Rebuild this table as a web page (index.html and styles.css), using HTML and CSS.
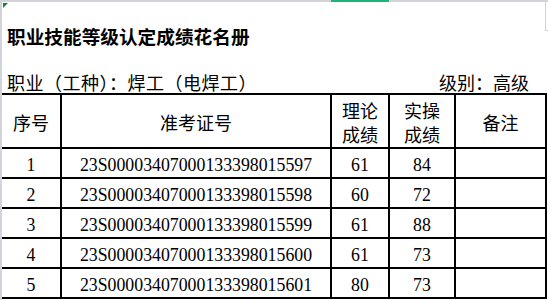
FILE: index.html
```html
<!DOCTYPE html>
<html lang="zh-CN">
<head>
<meta charset="utf-8">
<title>职业技能等级认定成绩花名册</title>
<link rel="stylesheet" href="styles.css">
</head>
<body>
<div class="sheet">
  <div class="marker"></div>
  <div class="colsel"></div>
  <div class="gridtick"></div>
  <h1 class="title">职业技能等级认定成绩花名册</h1>
  <div class="sub"><span>职业（工种）：焊工（电焊工）</span><span>级别：高级</span></div>
  <table class="roster">
    <colgroup>
      <col class="c-no"><col class="c-id"><col class="c-th"><col class="c-pr"><col class="c-note">
    </colgroup>
    <thead>
      <tr><th>序号</th><th>准考证号</th><th>理论<br>成绩</th><th>实操<br>成绩</th><th>备注</th></tr>
    </thead>
    <tbody>
      <tr><td>1</td><td>23S00003407000133398015597</td><td>61</td><td>84</td><td></td></tr>
      <tr><td>2</td><td>23S00003407000133398015598</td><td>60</td><td>72</td><td></td></tr>
      <tr><td>3</td><td>23S00003407000133398015599</td><td>61</td><td>88</td><td></td></tr>
      <tr><td>4</td><td>23S00003407000133398015600</td><td>61</td><td>73</td><td></td></tr>
      <tr><td>5</td><td>23S00003407000133398015601</td><td>80</td><td>73</td><td></td></tr>
    </tbody>
  </table>
</div>
</body>
</html>
```

FILE: styles.css
```css
html, body {
  margin: 0;
  background: #fff;
}
body {
  width: 548px;
  height: 300px;
  overflow: hidden;
  font-family: "Liberation Serif", "Noto Sans CJK SC", serif;
  color: #000;
}
.sheet {
  position: relative;
  height: 300px;
  box-sizing: border-box;
  border-top: 2px solid #d2d4da;
  border-left: 2px solid #d2d4da;
}
.marker {
  position: absolute;
  left: 1px;
  top: 1px;
  width: 0;
  height: 0;
  border-top: 5px solid #1e7e3e;
  border-right: 5px solid transparent;
}
.colsel {
  position: absolute;
  left: 329px;
  top: -2px;
  width: 58px;
  height: 2px;
  background: #21b27a;
}
.gridtick {
  position: absolute;
  left: 543px;
  top: 0;
  width: 3px;
  height: 28px;
  border-left: 1px solid #d2d4da;
  border-bottom: 1px solid #d2d4da;
}
.title {
  margin: 0;
  height: 67px;
  line-height: 67px;
  padding-left: 5px;
  font-family: "Noto Sans CJK SC", sans-serif;
  font-size: 18.67px;
  font-weight: 700;
}
.sub {
  height: 24px;
  line-height: 26px;
  display: flex;
  justify-content: space-between;
  padding: 0 19px 0 5px;
  font-family: "Noto Sans CJK SC", sans-serif;
  font-size: 18px;
}
.sub span:first-child {
  letter-spacing: 0.5px;
}
.roster {
  border-collapse: collapse;
  table-layout: fixed;
  width: 544px;
  font-size: 18px;
}
.c-no { width: 59px; }
.c-id { width: 270px; }
.c-th { width: 58px; }
.c-pr { width: 66px; }
.c-note { width: 91px; }
.roster th, .roster td {
  border: 2px solid #000;
  padding: 0;
  text-align: center;
  white-space: nowrap;
}
.roster tr > :first-child {
  border-left: none;
}
.roster th {
  font-family: "Noto Sans CJK SC", sans-serif;
  font-weight: 400;
  font-size: 18px;
  line-height: 24px;
  padding-top: 2px;
}
.roster thead tr { height: 54px; }
.roster tbody tr { height: 30px; }
.roster td {
  font-size: 17.8px;
  line-height: 20px;
  padding-top: 4px;
}
```
